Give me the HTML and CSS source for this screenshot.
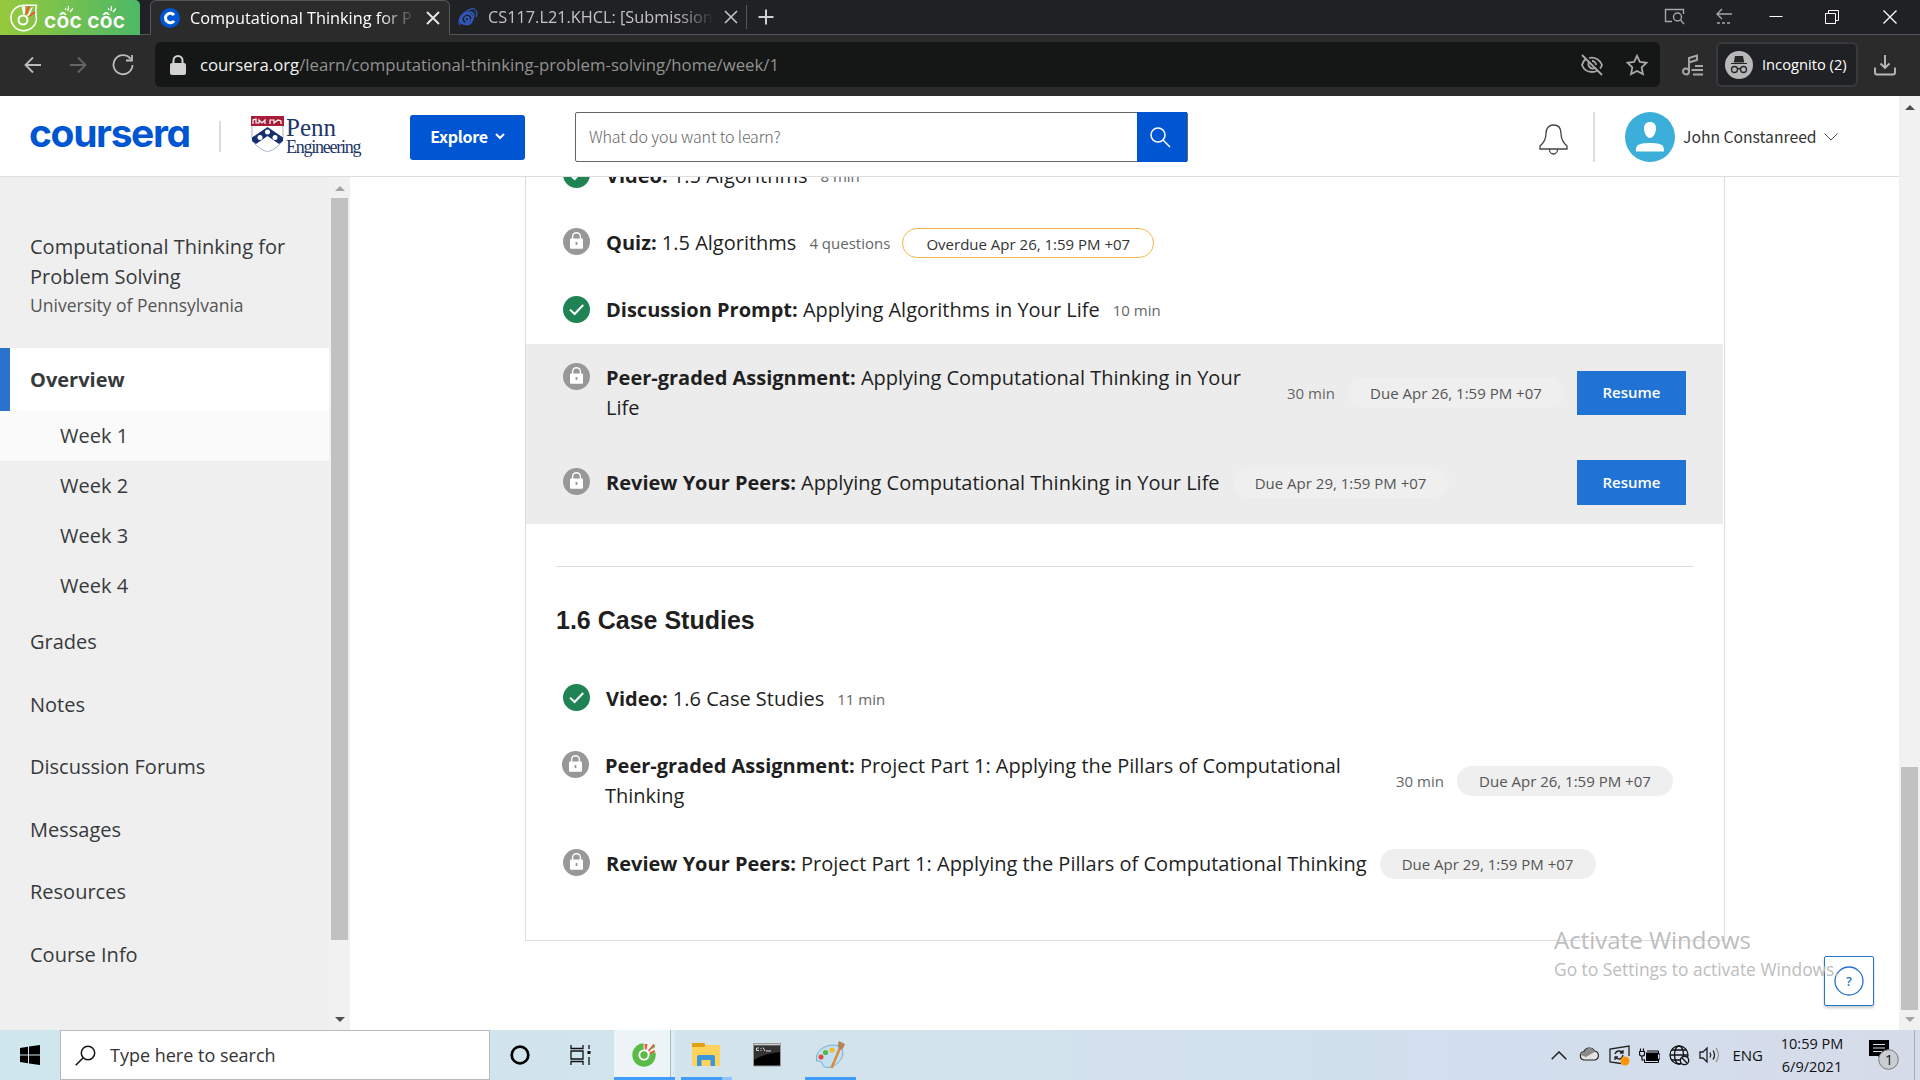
FILE: index.html
```html
<!DOCTYPE html>
<html lang="en">
<head>
<meta charset="utf-8">
<title>Computational Thinking for Problem Solving</title>
<link rel="stylesheet" href="styles.css">
</head>
<body>
<svg class="defs" width="0" height="0">
  <symbol id="lock" viewBox="0 0 27 27"><circle cx="13.5" cy="13.5" r="13.5" fill="#989898"/><path d="M9.6 11V8.6a3.9 3.9 0 0 1 7.8 0V11" fill="none" stroke="#fff" stroke-width="1.4"/><rect x="7" y="10.5" width="13" height="10.2" rx="1" fill="#fff"/><path d="M13.5 14v3" stroke="#989898" stroke-width="1.8"/></symbol>
  <symbol id="done" viewBox="0 0 27 27"><circle cx="13.5" cy="13.5" r="13.5" fill="#1f8354"/><path d="M7 13.6l4.6 4.4 8.6-9" fill="none" stroke="#fff" stroke-width="2"/></symbol>
</svg>
<div class="tabbar">
  <div class="brand">
    <svg width="28" height="28" viewBox="0 0 28 28" fill="none" stroke="#fff" stroke-width="1.5"><path d="M26.500 1.200H15A12.800 12.800 0 1 0 26.500 14.500C25.500 9 25.500 5 26.500 1.200z"/><circle cx="13" cy="16" r="4.500" stroke-width="2"/><path d="M11.500 2.500l3.500-.5v8h-2z" fill="#fff" stroke="none"/><path d="M17 2.500l3-.5-2.500 8-2 .5z" fill="#f2552c" stroke="none"/><path d="M21 4l2-1-4 9-2 0z" fill="#fff" stroke="none"/><path d="M24.500 7l1 2-6 4-1-1z" fill="#f2552c" stroke="none"/></svg>
    <span class="brand-name">côc côc</span>
    <svg class="spark s1" width="8" height="8" viewBox="0 0 8 8" stroke="#fff" stroke-width="1.300"><path d="M1 5L0 3M3 6L3.500 1M5 7l3-3.500"/></svg>
    <svg class="spark s2" width="8" height="8" viewBox="0 0 8 8" stroke="#fff" stroke-width="1.300"><path d="M1 5L0 3M3 6L3.500 1M5 7l3-3.500"/></svg>
  </div>
  <div class="tab tab-on">
    <svg width="20" height="20" viewBox="0 0 20 20"><circle cx="10" cy="10" r="10" fill="#0056d2"/><path d="M14 7.200a4.700 4.700 0 1 0 0 5.600" fill="none" stroke="#fff" stroke-width="3"/></svg>
    <span class="tab-title">Computational Thinking for P</span>
    <svg width="14" height="14" viewBox="0 0 14 14" stroke="#e8e8e8" stroke-width="1.900"><path d="M1 1l12 12M13 1L1 13"/></svg>
  </div>
  <div class="tab tab-off">
    <svg width="20" height="20" viewBox="0 0 20 20" fill="none" stroke="#2f58bd"><ellipse cx="9" cy="11" rx="7.500" ry="4.500" transform="rotate(-35 9 11)" stroke-width="2"/><circle cx="9" cy="12" r="5.500" stroke-width="1.800"/><circle cx="9" cy="12" r="2" stroke-width="1.800"/><path d="M2 18q-3-6 4-12 6-5 11-4M17 3q3 2 1 7" stroke-width="1.300"/></svg>
    <span class="tab-title">CS117.L21.KHCL: [Submission</span>
    <svg width="14" height="14" viewBox="0 0 14 14" stroke="#c4c4c4" stroke-width="1.600"><path d="M1 1l12 12M13 1L1 13"/></svg>
  </div>
  <div class="newtab"><svg width="16" height="16" viewBox="0 0 16 16" stroke="#d0d0d0" stroke-width="2"><path d="M8 0.500v15M0.500 8h15"/></svg></div>
  <div class="wincontrols">
    <svg width="21" height="17" viewBox="0 0 21 17" fill="none" stroke="#a5a6a8" stroke-width="1.400"><path d="M8 13.500H1.500v-12h18V6"/><circle cx="13.500" cy="9" r="4"/><path d="M16.500 12l3.500 4"/></svg>
    <svg width="18" height="17" viewBox="0 0 18 17" fill="none" stroke="#a5a6a8" stroke-width="1.400"><path d="M17 6H2M7 1L2 6l5 5"/><path d="M2 15h15" stroke-dasharray="3 2"/></svg>
    <svg width="14" height="14" viewBox="0 0 14 14" stroke="#fff"><path d="M0.500 6.500h13"/></svg>
    <svg width="14" height="14" viewBox="0 0 14 14" fill="none" stroke="#fff"><path d="M0.500 3.500h10v10h-10zM3.500 3V0.500h10v10H11"/></svg>
    <svg width="14" height="14" viewBox="0 0 14 14" stroke="#fff" stroke-width="1.300"><path d="M0.500 0.500l13 13M13.500 0.500l-13 13"/></svg>
  </div>
</div>
<div class="toolbar">
  <svg class="nav n1" width="18" height="18" viewBox="0 0 18 18" fill="none" stroke="#bcbcbc" stroke-width="1.800"><path d="M17 9H1.500M9 1.500L1.500 9 9 16.500"/></svg>
  <svg class="nav n2" width="18" height="18" viewBox="0 0 18 18" fill="none" stroke="#666" stroke-width="1.800"><path d="M1 9h15.500M9 1.500L16.500 9 9 16.500"/></svg>
  <svg class="nav n3" width="22" height="22" viewBox="0 0 22 22" fill="none" stroke="#bcbcbc" stroke-width="1.800"><path d="M18.600 5A9.500 9.500 0 1 0 20.500 11M20 1v5.500h-6"/></svg>
  <div class="address">
    <svg width="16" height="20" viewBox="0 0 16 20"><rect y="8" width="16" height="12" rx="2" fill="#d2d2d2"/><path d="M3.500 9V5.500a4.500 4.500 0 0 1 9 0V9" fill="none" stroke="#d2d2d2" stroke-width="2"/></svg>
    <span class="url"><b>coursera.org</b>/learn/computational-thinking-problem-solving/home/week/1</span>
    <svg class="eye" width="22" height="22" viewBox="0 0 22 22" fill="none" stroke="#a8a8a8" stroke-width="1.800"><path d="M4.500 5C2.500 7 1.500 9 1 11c2 5 6 7 10 7 2 0 3.500-.4 5-1.300M8 4c6-1.500 11 2 13 7-.5 1.500-1 2.500-2 3.500M1 1l20 20M8 8c-2 4 2 8 6 6M11 7c2 0 4 1.500 4 4"/></svg>
    <svg width="22" height="22" viewBox="0 0 22 22" fill="none" stroke="#a8a8a8" stroke-width="1.800"><path d="M11 1.800l2.900 6.100 6.600.9-4.800 4.600 1.200 6.700-5.900-3.200-5.900 3.200 1.200-6.700L1.500 8.800l6.600-.9z"/></svg>
  </div>
  <svg class="music" width="22" height="22" viewBox="0 0 22 22" fill="none" stroke="#a8a8a8" stroke-width="1.900"><circle cx="4" cy="17.500" r="3"/><path d="M7 17V4l8-2.500V6L7 8.500M13 12h8M9.500 16h11.500M11 20.500h10"/></svg>
  <div class="incog">
    <svg width="28" height="28" viewBox="0 0 28 28"><circle cx="14" cy="14" r="14" fill="#b8b8b8"/><path d="M6 12.500h16M9.500 11l1-5.500h7l1 5.500z" fill="#252628" stroke="#252628" stroke-width="1.200"/><g fill="none" stroke="#252628" stroke-width="1.300"><circle cx="9.500" cy="18.500" r="3"/><circle cx="18.500" cy="18.500" r="3"/><path d="M12.500 18q1.500-1 3 0"/></g></svg>
    <span>Incognito (2)</span>
  </div>
  <svg class="dl" width="22" height="22" viewBox="0 0 22 22" fill="none" stroke="#b8b8b8" stroke-width="1.900"><path d="M11 1v13M6.500 9.500L11 14l4.500-4.500M1 13.500v5q0 2 2 2h16q2 0 2-2v-5"/></svg>
</div>
<div class="view">
  <div class="page">
    <header class="header">
      <span class="logo">coursera</span>
      <i class="vline l1"></i>
      <div class="penn">
        <svg width="33" height="36" viewBox="0 0 33 36"><path d="M1 0h31v22q-2 9-15.500 14Q3 31 1 22z" fill="#fff" stroke="#a9b4c8"/><path d="M0 0h33v10H0z" fill="#a81c38"/><path d="M2 8V4l3-1v4h3V4l3 3 3-3v4M19 8V4h4v3l4-3 3 1v3" fill="none" stroke="#fff" stroke-width="1.200"/><path d="M16.500 11L32 21.500V25l-4 3-11.500-8L5 28l-4-3v-3.500z" fill="#14306f"/><circle cx="16.500" cy="16" r="2.500" fill="#fff"/><circle cx="9" cy="21.500" r="2.500" fill="#fff"/><circle cx="24" cy="21.500" r="2.500" fill="#fff"/></svg>
        <div class="penn-text"><span>Penn</span><span class="eng">Engineering</span></div>
      </div>
      <div class="explore">Explore <svg width="10" height="7" viewBox="0 0 10 7" fill="none" stroke="#fff" stroke-width="2"><path d="M1 1l4 4 4-4"/></svg></div>
      <div class="search"><span>What do you want to learn?</span><div class="go"><svg width="22" height="22" viewBox="0 0 22 22" fill="none" stroke="#fff" stroke-width="1.500"><circle cx="9" cy="9" r="7"/><path d="M14 14l7 7"/></svg></div></div>
      <svg class="bell" width="29" height="31" viewBox="0 0 29 31" fill="none" stroke="#444" stroke-width="1.300"><path d="M1 25v-3q6-5 6-12.500C7 4 10 1 14.500 1S22 4 22 9.500Q22 17 28 22v3zM10.500 25.500a4 4.500 0 0 0 8 0"/></svg>
      <i class="vline l2"></i>
      <svg class="avatar" width="50" height="50" viewBox="0 0 50 50"><circle cx="25" cy="25" r="25" fill="#3bafda"/><path d="M25 10c4 0 6 2.500 6 6.500S28.500 26 25 26s-6-5.500-6-9.500S21 10 25 10zM11 39.500c0-7 2-8 14-8.500 12 .5 14 1.500 14 8.500z" fill="#fff"/></svg>
      <span class="user">John Constanreed</span>
      <svg width="14" height="8" viewBox="0 0 14 8" fill="none" stroke="#555"><path d="M.5.500l6.500 6.500 6.500-6.500"/></svg>
    </header>
    <div class="body">
      <aside class="side">
        <nav class="menu">
          <div class="course"><div class="course-name">Computational Thinking for Problem Solving</div><div class="uni">University of Pennsylvania</div></div>
          <div class="item on">Overview</div>
          <div class="week cur">Week 1</div><div class="week">Week 2</div><div class="week">Week 3</div><div class="week">Week 4</div>
          <div class="item">Grades</div><div class="item">Notes</div><div class="item">Discussion Forums</div><div class="item">Messages</div><div class="item">Resources</div><div class="item">Course Info</div>
        </nav>
        <div class="sbar"><i class="up"></i><i class="thumb"></i><i class="down"></i></div>
      </aside>
      <main class="main">
        <section class="card">
          <div class="row r0"><svg class="ic"><use href="#done"/></svg><p class="ttl"><b>Video:</b> 1.5 Algorithms</p><span class="meta">8 min</span></div>
          <div class="row"><svg class="ic"><use href="#lock"/></svg><p class="ttl"><b>Quiz:</b> 1.5 Algorithms</p><span class="meta">4 questions</span><span class="pill over">Overdue Apr 26, 1:59 PM +07</span></div>
          <div class="row disc"><svg class="ic"><use href="#done"/></svg><p class="ttl"><b>Discussion Prompt:</b> Applying Algorithms in Your Life</p><span class="meta">10 min</span></div>
          <div class="shade">
            <div class="row tall"><svg class="ic"><use href="#lock"/></svg><p class="ttl w1"><b>Peer-graded Assignment:</b> Applying Computational Thinking in Your<br>Life</p><span class="meta">30 min</span><span class="pill">Due Apr 26, 1:59 PM +07</span><span class="btn">Resume</span></div>
            <div class="row mid"><svg class="ic"><use href="#lock"/></svg><p class="ttl"><b>Review Your Peers:</b> Applying Computational Thinking in Your Life</p><span class="pill">Due Apr 29, 1:59 PM +07</span><span class="btn">Resume</span></div>
          </div>
          <h2>1.6 Case Studies</h2>
          <div class="row"><svg class="ic"><use href="#done"/></svg><p class="ttl"><b>Video:</b> 1.6 Case Studies</p><span class="meta">11 min</span></div>
          <div class="row tall project"><svg class="ic"><use href="#lock"/></svg><p class="ttl w2"><b>Peer-graded Assignment:</b> Project Part 1: Applying the Pillars of Computational<br>Thinking</p><span class="meta">30 min</span><span class="pill">Due Apr 26, 1:59 PM +07</span></div>
          <div class="row"><svg class="ic"><use href="#lock"/></svg><p class="ttl"><b>Review Your Peers:</b> Project Part 1: Applying the Pillars of Computational Thinking</p><span class="pill">Due Apr 29, 1:59 PM +07</span></div>
        </section>
      </main>
    </div>
  </div>
  <div class="pbar"><i class="up"></i><i class="thumb"></i><i class="down"></i></div>
</div>
<div class="help"><svg width="30" height="30" viewBox="0 0 30 30"><circle cx="15" cy="15" r="14" fill="none" stroke="#2a73cc" stroke-width="1.300"/></svg><span>?</span></div>
<div class="activate"><div class="a1">Activate Windows</div><div class="a2">Go to Settings to activate Windows.</div></div>
<div class="taskbar">
  <div class="start"><svg width="20" height="20" viewBox="0 0 20 20"><path d="M0 3l8-1.200V9.500H0zM9 1.600L20 0v9.500H9zM0 10.500h8v7.700L0 17zM9 10.500h11V20L9 18.400z"/></svg></div>
  <div class="tsearch"><svg width="21" height="21" viewBox="0 0 21 21" fill="none" stroke="#111" stroke-width="1.500"><circle cx="13" cy="8" r="6.700"/><path d="M8.200 12.800L.7 20.300"/></svg><span>Type here to search</span></div>
  <div class="tk"><svg width="20" height="20" viewBox="0 0 20 20"><circle cx="10" cy="10" r="8.300" fill="none" stroke="#000" stroke-width="2.700"/></svg></div>
  <div class="tk"><svg width="21" height="20" viewBox="0 0 21 20" fill="none" stroke="#111" stroke-width="1.300"><path d="M1 0v3.500h12V0M1 20v-3.500h12V20M1 6h12v8H1zM19 0v4M19 12v8"/><path d="M17.500 7.500h3" stroke-width="3"/></svg></div>
  <div class="tk app active"><svg width="24" height="24" viewBox="0 0 24 24"><circle cx="12" cy="12" r="11.700" fill="#5bbb46"/><path d="M12 12L11.500 0H24v9z" fill="#ecf4f8"/><circle cx="12" cy="12" r="5.600" fill="#fff"/><circle cx="12" cy="12" r="3.700" fill="#5bbb46"/><path d="M12.500 1h3l-1 5.500-1.500 0zM17.500 9.500l5-2.500.5 2-5 2z" fill="#f2552c"/><path d="M21.500 1l1 1.500-5.500 6-1-1z" fill="#d8492a"/><path d="M23.500 1l-4 5 3-1z" fill="#5bbb46"/></svg></div>
  <div class="tk app folder"><svg width="28" height="23" viewBox="0 0 28 23"><path d="M0 2h28v21H0z" fill="#ffd35b"/><path d="M0 1q0-1 1-1h11q1 0 1 1v2l-1 1H0z" fill="#e0a010"/><path d="M5 23V14q0-2 2-2h14q2 0 2 2v9h-4.500v-6h-9v6z" fill="#3a96dd"/></svg></div>
  <div class="tk app cmd"><svg width="28" height="24" viewBox="0 0 28 24"><path d="M.5.500h27v22.500H.500z" fill="#000" stroke="#999"/><path d="M1 1h26v1.500H1z" fill="#ccc"/><path d="M1 3h26v6Q10 11 1 17z" fill="#333"/><path d="M3.500 5h2.500M3.500 7.500h2.500M3.500 5v2.500M8 5v1M8 7v1M10 4.500l2 3.500M13 8h5" stroke="#ddd"/></svg></div>
  <div class="tk app paint"><svg width="30" height="28" viewBox="0 0 30 28"><path d="M1.500 20Q0 9 12 5q10-3 15 3 3 7-4 14-7 6-13 4-3-1-3-4-1-3-5.500-2z" fill="#c3e0f3" stroke="#78aed2"/><circle cx="6" cy="16" r="2.500" fill="#e04a35"/><circle cx="10.500" cy="11.500" r="2.600" fill="#55b848"/><circle cx="17" cy="9" r="2.600" fill="#f5b927"/><path d="M25 7l-8.500 20" stroke="#dd8a35" stroke-width="2.500"/><path d="M24 8q-2-4 0-8l6 3q-1 4-4 6z" fill="#b08455"/></svg></div>
  <div class="tray">
    <svg width="16" height="9" viewBox="0 0 16 9" fill="none" stroke="#222" stroke-width="1.500"><path d="M.7 8.300L8 1l7.300 7.300"/></svg>
    <svg class="cloud" width="21" height="15" viewBox="0 0 21 15"><path d="M5 14a4.300 4.300 0 0 1 0-8.500A6 6 0 0 1 15.500 5 4.600 4.600 0 0 1 16 14z" fill="#e4e4e4" stroke="#222" stroke-width="1.200"/><path d="M1.500 9Q2 5.500 5.500 6 8 1 12 2q3 1 3.500 4L7 11z" fill="#8a8a8a"/></svg>
    <svg width="21" height="21" viewBox="0 0 21 21" fill="none" stroke="#222" stroke-width="1.300"><path d="M12 18.500L1 17V4l19-3v10M6 9q1-3 4-3 3 0 4 2M14 5v3h-3M14 10q-1 4-4 4-3 0-4-2M6 15v-3h3"/><circle cx="16" cy="16" r="4.500" fill="#ff9500" stroke="none"/></svg>
    <svg width="21" height="15" viewBox="0 0 21 15"><path d="M7 4.500h12v8.500H7z" fill="#000"/><path d="M5.500 13.500V12M8 3h11.500v3H21v5h-1.500v3.500H5.500v-3" fill="none" stroke="#000"/><path d="M.5 3.500h5V6q0 2-2.500 2T.5 6zM1.500.500v3M4.500.500v3M3 8v4h3" fill="none" stroke="#111" stroke-width="1.200"/></svg>
    <svg width="21" height="21" viewBox="0 0 21 21" fill="none" stroke="#111" stroke-width="1.300"><circle cx="10" cy="10" r="9"/><ellipse cx="10" cy="10" rx="4.500" ry="9"/><path d="M1 10h18M2.500 5h15M2.500 15h9"/><circle cx="15.500" cy="15.500" r="4.200" fill="#d4ddea"/><path d="M12.800 12.800l5.400 5.400"/></svg>
    <svg width="21" height="18" viewBox="0 0 21 18" fill="none" stroke="#222" stroke-width="1.300"><path d="M1 6h3l4-4v14l-4-4H1zM11 6.500q1.500 2.500 0 5M14 4.500q3 4.500 0 9"/><path d="M17 2q5 7 0 14" stroke="#999"/></svg>
    <span class="eng-l">ENG</span>
    <div class="clock"><span>10:59 PM</span><span>6/9/2021</span></div>
    <div class="note"><svg width="30" height="30" viewBox="0 0 30 30"><path d="M0 0h20v16h-7v4l-4-4H0z"/><path d="M4 4.500h12M4 8h12M4 11.500h9" stroke="#d4ddea" stroke-width="1.200"/><circle cx="19.500" cy="19.500" r="9.800" fill="#c9cdd4" stroke="#777"/></svg><span>1</span></div>
  </div>
  <div class="peek"></div>
</div>
</body>
</html>
```
FILE: styles.css
```css
* { box-sizing: border-box; }
body { margin: 0; width: 1920px; height: 1080px; overflow: hidden; display: flex; flex-direction: column; font-family: "Open Sans", sans-serif; color: #1f1f1f; background: #fff; position: relative; }
svg { display: block; flex: none; }
.defs { position: absolute; }

/* browser tabs */
.tabbar { height: 35px; flex: none; display: flex; background: #202124; border-bottom: 1px solid #55565a; }
.brand { width: 140px; height: 35px; margin-right: 10px; display: flex; align-items: center; padding-left: 10px; gap: 6px; background: linear-gradient(90deg, #97c93d, #4db866); border-top-right-radius: 5px; position: relative; }
.brand-name { font: 600 21px/20px "Inter", sans-serif; color: #fff; letter-spacing: .2px; padding-top: 6px; white-space: nowrap; }
.spark { position: absolute; top: 5px; }
.s1 { left: 65px; }
.s2 { left: 108px; }
.tab { height: 35px; display: flex; align-items: center; gap: 10px; padding: 0 10px; font-size: 16px; color: #fff; }
.tab-on { width: 300px; background: #2a2b2a; border: 1px solid #55565a; border-bottom: 0; border-radius: 6px 6px 0 0; padding-left: 9px; padding-right: 9px; }
.tab-off { width: 297px; border-right: 1px solid #55565a; height: 24px; margin-top: 5px; color: #c4c4c4; padding-left: 8px; padding-right: 8px; }
.tab-title { flex: 1; white-space: nowrap; overflow: hidden; font-size: 16.300px; padding-bottom: 1px; -webkit-mask: linear-gradient(90deg, #000 84%, transparent); mask: linear-gradient(90deg, #000 84%, transparent); }
.newtab { padding: 9px 0 0 11px; }
.wincontrols { margin-left: auto; display: grid; grid-template-columns: 51px 54px 56px 58px 37px; width: 256px; align-items: center; height: 33px; }

/* address bar */
.toolbar { height: 61px; flex: none; display: flex; align-items: center; background: #2a2b2a; padding: 0 23px 2px 24px; }
.n2 { margin-left: 27px; }
.n3 { margin-left: 25px; }
.address { width: 1505px; height: 45px; margin-left: 21px; border-radius: 6px; background: #151716; display: flex; align-items: center; padding: 0 12px 0 15px; }
.url { margin-left: 14px; font-size: 16.750px; color: #929292; padding-bottom: 1px; }
.url b { font-weight: 400; color: #f2f2f2; }
.eye { margin-left: auto; margin-right: 23px; }
.music { margin-left: 22px; }
.incog { width: 142px; height: 45px; margin-left: 12px; border: 2px solid #38393a; border-radius: 6px; background: #202124; display: flex; align-items: center; gap: 9px; padding-left: 7px; color: #fff; font-size: 14.700px; white-space: nowrap; }
.incog span { padding-bottom: 1px; }
.dl { margin-left: 16px; }

/* page */
.view { height: 934px; flex: none; display: flex; }
.page { width: 1899px; display: flex; flex-direction: column; }
.header { height: 81px; flex: none; border-bottom: 1px solid #ddd; display: flex; align-items: center; padding: 2px 0 0 29px; background: #fff; font-family: "Noto Sans CJK SC", sans-serif; }
.logo { width: 162px; font: 700 39px/40px "Inter", sans-serif; font-feature-settings: "cv11"; letter-spacing: -1.350px; color: #0056d2; margin-top: -9px; white-space: nowrap; }
.vline { width: 2px; background: #ddd; }
.l1 { height: 31px; margin: -2px 0 0 28px; }
.penn { width: 110px; margin: -1px 0 0 30px; display: flex; height: 42px; gap: 2px; }
.penn-text { display: flex; flex-direction: column; font: 25px/23px "Liberation Serif", serif; color: #1c3567; }
.eng { font-size: 18px; line-height: 16px; letter-spacing: -1.250px; }
.explore { width: 115px; height: 45px; margin-left: 49px; border-radius: 3px; background: #0056d2; color: #fff; font-weight: 700; font-size: 16px; line-height: 42px; padding-bottom: 2px; letter-spacing: -.3px; display: flex; align-items: center; justify-content: center; gap: 7px; }
.search { width: 613px; height: 50px; margin-left: 50px; border: 1px solid #666; border-radius: 2px; display: flex; align-items: center; justify-content: space-between; padding-left: 13px; font-size: 16px; letter-spacing: -.15px; font-weight: 300; color: #666; }
.search span { padding-bottom: 2px; }
.go { width: 50px; height: 50px; background: #0056d2; display: grid; place-items: center; padding-right: 5px; }
.bell { margin-left: 351px; margin-top: 5px; }
.l2 { height: 50px; margin-left: 25px; }
.avatar { margin-left: 30px; }
.user { margin: 0 8px; padding-bottom: 2px; width: 133px; font-size: 15.700px; color: #333; white-space: nowrap; }
.body { height: 853px; display: flex; overflow: hidden; }
.side { width: 350px; display: flex; background: #efefef; }
.menu { width: 329px; font-size: 20px; color: #373a3c; }
.course { height: 171px; padding: 55px 20px 0 30px; line-height: 30px; }
.uni { font-size: 17.500px; line-height: 26px; color: #555; }
.item { height: 62.600px; line-height: 62px; padding-left: 30px; }
.item.on { height: 63px; line-height: 64px; border-left: 10px solid #2a73cc; padding-left: 20px; background: #fff; font-weight: 700; }
.week { height: 50px; line-height: 50px; padding-left: 60px; }
.cur { background: #fafafa; }
.sbar, .pbar { flex: none; width: 21px; background: #f1f1f1; display: flex; flex-direction: column; align-items: center; }
.up, .down { border: 5px solid transparent; width: 0; height: 0; }
.up { border-top: 0; border-bottom-color: #a3a3a3; margin-top: 9px; }
.down { border-bottom: 0; border-top-color: #505050; margin-top: auto; margin-bottom: 8px; }
.thumb { width: 17px; background: #c1c1c1; }
.sbar .thumb { height: 742px; margin-top: 7px; }
.pbar .up { border-bottom-color: #505050; }
.pbar .thumb { height: 243px; margin-top: 657px; }
.pbar .down { border-top-color: #a3a3a3; }
.main { flex: 1; padding: 0 174px 0 175px; width: 1549px; }
.card { width: 1200px; height: 764px; border: 1px solid #ddd; border-top: 0; overflow: hidden; }
.row { display: flex; height: 67px; align-items: center; padding: 0 37px; }
.r0 { margin-top: -35px; }
.disc { height: 68px; }
.ic { width: 27px; height: 27px; margin: -2px 16px 0 0; }
.ttl { margin: 0; font-size: 20px; line-height: 30px; white-space: nowrap; }
.meta { margin-left: 13px; font-size: 15px; color: #666; white-space: nowrap; }
.pill { margin-left: 13px; width: 216px; height: 30px; border-radius: 15px; background: #efefef; color: #555; font-size: 15px; line-height: 30px; text-align: center; white-space: nowrap; flex: none; }
.over { margin-left: 12px; width: 252px; background: #fff; border: 1px solid #f3b74b; color: #333; }
.btn { margin-left: auto; width: 109px; height: 45px; background: #2073d5; color: #fff; font-size: 15px; font-weight: 600; text-align: center; line-height: 44px; }
.shade { width: 1197px; height: 180px; background: #ececec; }
.tall { height: 97px; }
.tall .ic { align-self: flex-start; margin-top: 19px; }
.tall .btn { height: 44px; line-height: 43px; }
.mid { height: 83px; }
.w1 { width: 668px; }
.project { height: 98px; padding-left: 36px; }
.w2 { width: 778px; }
h2 { margin: 42px 31px 0 30px; border-top: 1px solid #ddd; height: 99px; padding-top: 38px; font: bold 25px/30px "Liberation Sans", sans-serif; }

/* overlays */
.help { position: absolute; left: 1824px; top: 956px; width: 50px; height: 50px; border: 1px solid #2a73cc; border-radius: 2px; background: #fff; box-shadow: 0 2px 3px #0003; display: grid; place-items: center; color: #2a73cc; font-size: 13px; font-weight: 600; }
.help > * { grid-area: 1 / 1; }
.activate { position: absolute; left: 1554px; top: 922px; color: #bdbdbd; white-space: nowrap; }
.a1 { font-size: 24px; line-height: 36px; }
.a2 { font-size: 17.400px; line-height: 23px; }

/* taskbar */
.taskbar { height: 50px; flex: none; display: flex; background: linear-gradient(90deg, #cfe6ed, #d3e3ec 45%, #d1dfee 75%, #d6dbe9); color: #111; }
.start { width: 60px; display: grid; place-items: center; }
.tsearch { width: 430px; border: 1px solid #bbb; background: #fff; display: flex; align-items: center; gap: 14px; padding-left: 14px; font-size: 18px; color: #333; }
.tk { width: 60px; display: grid; place-items: center; }
.active { width: 61px; margin-left: 4px; padding-right: 2px; background: linear-gradient(#429cfa, #429cfa) bottom / 100% 3px no-repeat, linear-gradient(90deg, #ecf4f8 56px, #a9bcc6 56px 57px, #dcecf3 57px); }
.folder { width: 51px; margin: 0 0 0 6px; padding: 0 2px 1px 0; background: linear-gradient(90deg, #429cfa 41px, #8fc3fb 41px) bottom / 100% 3px no-repeat; }
.cmd { width: 62px; margin-left: 4px; }
.paint { width: 51px; margin-left: 7px; padding-right: 2px; background: linear-gradient(#429cfa, #429cfa) bottom / 100% 3px no-repeat; }
.tray { margin-left: auto; display: flex; align-items: center; gap: 9px; padding-right: 15px; }
.cloud { margin-left: 3px; margin-top: -3px; }
.eng-l { font-size: 15px; margin-left: 3px; }
.clock { width: 76px; margin: 0 10px 0 2px; display: flex; flex-direction: column; align-items: center; font-size: 14.500px; line-height: 23px; }
.note { display: grid; }
.note > * { grid-area: 1 / 1; }
.note span { padding: 10px 0 0 16px; font-size: 14px; line-height: 20px; }
.peek { width: 6px; border-left: 1px solid #a4adba; }
```
